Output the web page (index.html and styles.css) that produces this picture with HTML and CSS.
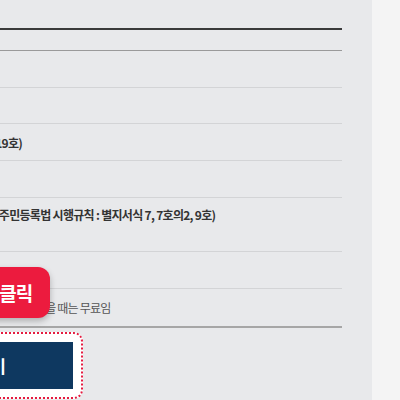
FILE: index.html
```html
<!DOCTYPE html>
<html>
<head>
    <title>민원 안내</title>
    <link rel="stylesheet" href="styles.css">
</head>
<body>
    <div class="page">
        <div class="main">
            <div class="board">
                <div class="row head">
                    <div class="label">구분</div>
                    <div class="cell"></div>
                </div>
                <div class="row">
                    <div class="label">신청인</div>
                    <div class="cell"></div>
                </div>
                <div class="row short">
                    <div class="label">처리기간</div>
                    <div class="cell"></div>
                </div>
                <div class="row">
                    <div class="label">서식</div>
                    <div class="cell"><span class="pull">(별지서식 19호)</span></div>
                </div>
                <div class="row">
                    <div class="label">구비서류</div>
                    <div class="cell"></div>
                </div>
                <div class="row tall">
                    <div class="label">근거법령</div>
                    <div class="cell">(주민등록법 시행규칙 : 별지서식 7, 7호의2, 9호)</div>
                </div>
                <div class="row">
                    <div class="label">수수료</div>
                    <div class="cell"></div>
                </div>
                <div class="row last">
                    <div class="label">비고</div>
                    <div class="cell note"><span class="pull-note">※ 직접 발급받을 때는 무료임</span></div>
                </div>
            </div>

            <div class="apply">
                <a class="apply-btn" href="#"><span>온라인 발급 신청하기</span></a>
            </div>

            <div class="callout">바로가기 클릭</div>
        </div>
        <div class="aside"></div>
    </div>
</body>
</html>
```

FILE: styles.css
```css
html, body {
    margin: 0;
    height: 100%;
}
body {
    font-family: "Noto Sans CJK KR", "Noto Sans", sans-serif;
    color: #333;
    overflow: hidden;
}
.page {
    display: flex;
    height: 400px;
}
.main {
    position: relative;
    width: 372px;
    background-color: #e8e9eb;
    overflow: hidden;
}
.aside {
    flex: 1;
    background-color: #f4f4f4;
}
.board {
    margin-left: -140px;
    width: 482px;
    padding-top: 28px;
}
.row {
    display: flex;
    height: 37px;
    border-bottom: 1px solid #d3d4d6;
    box-sizing: border-box;
    font-size: 12px;
    font-weight: 700;
    letter-spacing: -0.7px;
    align-items: center;
}
.row.head {
    height: 23px;
    border-top: 2px solid #3a3a3a;
    border-bottom: 1px solid #9a9a9a;
}
.row.short {
    height: 36px;
}
.row.tall {
    height: 54px;
    align-items: flex-start;
    padding-top: 8px;
}
.row.last {
    height: 39px;
    border-bottom: 2px solid #a6a6a6;
}
.label {
    width: 120px;
    padding-left: 10px;
    box-sizing: border-box;
}
.cell {
    flex: 1;
    padding-left: 15px;
    white-space: nowrap;
}
.pull {
    margin-left: -47px;
}
.note {
    font-size: 12px;
    font-weight: 400;
    color: #555;
    letter-spacing: -0.8px;
}
.pull-note {
    margin-left: -16px;
}
.apply {
    margin: 4px 0 0 -100px;
    width: 163px;
    padding: 8px;
    background-color: #fff;
    border: 2px dotted #e51b40;
    border-radius: 9px;
}
.apply-btn {
    display: flex;
    justify-content: flex-end;
    align-items: center;
    height: 47px;
    padding-right: 67px;
    background-color: #0e3860;
    color: #fff;
    font-size: 17px;
    font-weight: 700;
    text-decoration: none;
    white-space: nowrap;
    overflow: hidden;
}
.callout {
    position: absolute;
    left: -70px;
    top: 267px;
    width: 100px;
    height: 51px;
    padding-right: 20px;
    box-sizing: content-box;
    border-radius: 12px;
    background-color: #ec1b3e;
    box-shadow: 0 3px 6px rgba(0, 0, 0, 0.25);
    color: #fff;
    font-size: 19px;
    font-weight: 700;
    letter-spacing: -1px;
    line-height: 51px;
    text-align: right;
    white-space: nowrap;
}
```
